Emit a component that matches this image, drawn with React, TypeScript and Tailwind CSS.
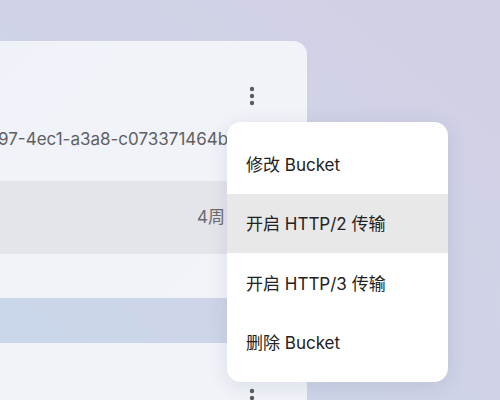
import React from "react";

const font = { fontFamily: "Inter, 'Noto Sans CJK SC', sans-serif" };

function Kebab() {
  return (
    <svg width="24" height="24" viewBox="0 0 24 24" className="text-[#5c5c5e]">
      <circle cx="12" cy="5" r="2.2" fill="currentColor" />
      <circle cx="12" cy="12" r="2.2" fill="currentColor" />
      <circle cx="12" cy="19" r="2.2" fill="currentColor" />
    </svg>
  );
}

export default function App() {
  const items = ["修改 Bucket", "开启 HTTP/2 传输", "开启 HTTP/3 传输", "删除 Bucket"];

  return (
    <div
      style={font}
      className="relative h-[400px] w-[500px] overflow-hidden bg-[linear-gradient(to_top_right,#c8d7ea,#d0d3e7_50%,#d1d0e5)] pt-[41px]"
    >
      <div className="-ml-[40px] flex w-[347px] flex-col gap-[45px]">
        {/* Bucket card */}
        <div className="rounded-[14px] bg-[linear-gradient(135deg,#eff2f8,#f2f4f9)]">
          <div className="flex justify-end pr-[43px] pt-[43px]">
            <Kebab />
          </div>
          <div className="mt-[20px] whitespace-nowrap pl-[38px] text-[17px] leading-[22px] text-[#606062]">
            97-4ec1-a3a8-c073371464bd
          </div>
          <div className="mt-[31px] flex h-[73px] items-center justify-end bg-[#e3e5ea] pr-[82px] text-[17px] text-[#6a6a6c]">
            4周
          </div>
          <div className="h-[44px]" />
        </div>

        <div className="h-[200px] rounded-[14px] bg-[#f0f3f8]">
          <div className="flex justify-end pr-[43px] pt-[43px]">
            <Kebab />
          </div>
        </div>
      </div>

      {/* Dropdown menu */}
      <div className="absolute left-[227px] top-[122px] w-[221px] rounded-[14px] bg-white pb-[10px] pt-[12px] shadow-[0_4px_20px_rgba(60,70,110,0.12)]">
        {items.map((item, i) => (
          <div
            key={item}
            className={`flex h-[59.5px] items-center px-[19px] pt-[3px] text-[17px] text-[#222] ${
              i === 1 ? "bg-[#e8e8e8]" : ""
            }`}
          >
            {item}
          </div>
        ))}
      </div>
    </div>
  );
}
